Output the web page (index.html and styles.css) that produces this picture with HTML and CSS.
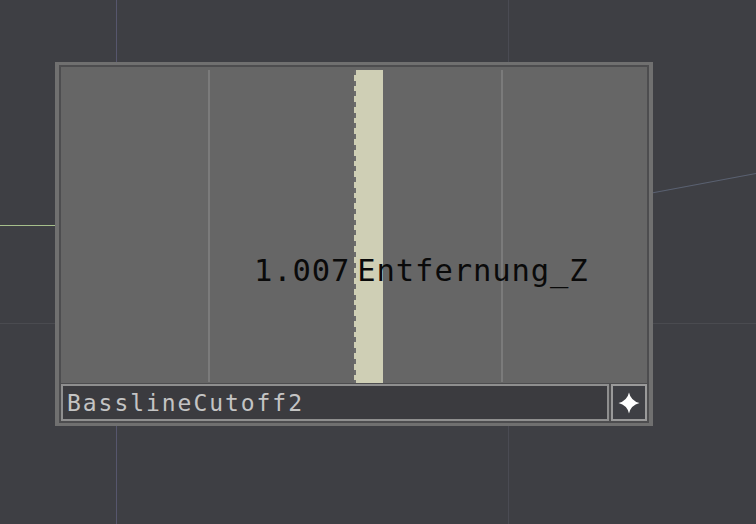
FILE: index.html
```html
<!DOCTYPE html>
<html>
<head>
<meta charset="utf-8">
<link rel="stylesheet" href="styles.css">
</head>
<body>
<div class="canvas">
  <div class="grid-v grid-v1"></div>
  <div class="grid-v grid-v2"></div>
  <div class="grid-h"></div>
  <div class="wire-in"></div>
  <svg class="wire-out" width="756" height="524" viewBox="0 0 756 524">
    <line x1="649" y1="193.5" x2="756" y2="173.5" stroke="#5a6171" stroke-width="1.2"/>
  </svg>

  <div class="node">
    <div class="panel">
      <div class="tick tick-a"></div>
      <div class="tick tick-b"></div>
      <div class="slider" style="left:50%"></div>
      <div class="label">
        <span class="value">1.007</span>
        <span class="name">Entfernung_Z</span>
      </div>
    </div>
    <div class="footer">
      <div class="field">BasslineCutoff2</div>
      <div class="btn">
        <svg width="24" height="24" viewBox="0 0 24 24">
          <path d="M12 1.5 Q13.8 9.8 22.5 12 Q13.8 14.2 12 22.5 Q10.2 14.2 1.5 12 Q10.2 9.8 12 1.5Z" fill="#ffffff"/>
        </svg>
      </div>
    </div>
  </div>
</div>
</body>
</html>
```
FILE: styles.css
```css
html, body {
  margin: 0;
  padding: 0;
  background: #3e3f44;
}
.canvas {
  position: relative;
  width: 756px;
  height: 524px;
  overflow: hidden;
  background: #3e3f44;
}
.grid-v {
  position: absolute;
  top: 0;
  bottom: 0;
  width: 1px;
}
.grid-v1 { left: 116px; background: #56566d; }
.grid-v2 { left: 508px; background: #4a4b53; }
.grid-h {
  position: absolute;
  left: 0;
  right: 0;
  top: 323px;
  height: 1px;
  background: #4a4b50;
}
.wire-in {
  position: absolute;
  left: 0;
  width: 62px;
  top: 225px;
  height: 1px;
  background: #a6bf8c;
}
.wire-out {
  position: absolute;
  left: 0;
  top: 0;
}
.node {
  position: absolute;
  left: 55px;
  top: 62px;
  width: 598px;
  height: 364px;
  box-sizing: border-box;
  border-style: solid;
  border-color: #707070;
  border-width: 3px 4px;
  padding: 2px;
  background: #4d4d4f;
  display: flex;
  flex-direction: column;
  gap: 1px;
}
.panel {
  position: relative;
  height: 316px;
  background: #666666;
  flex: none;
}
.tick {
  position: absolute;
  top: 3px;
  bottom: 1px;
  width: 2px;
  background: #7b7b7b;
}
.tick-a { left: 147px; }
.tick-b { left: 440px; }
.slider {
  position: absolute;
  top: 3px;
  bottom: 0;
  width: 29px;
  background: #cfcfb5;
}
.slider::before {
  content: "";
  position: absolute;
  left: 0;
  top: 0;
  bottom: 0;
  width: 2px;
  background: repeating-linear-gradient(to bottom, #6c6c6c 0 5px, #cfcfb5 5px 10.7px);
}
.label {
  position: absolute;
  left: 193px;
  top: 189px;
  display: flex;
  gap: 7px;
  font-family: "DejaVu Sans Mono", monospace;
  font-size: 30.5px;
  line-height: 30px;
  letter-spacing: 0.9px;
  color: #0a0a0a;
  white-space: nowrap;
}
.footer {
  flex: 1;
  display: flex;
  gap: 2px;
}
.field {
  flex: 1;
  box-sizing: border-box;
  border: 2px solid #8f8f8f;
  background: #3b3b3f;
  color: #c4c4c4;
  font-family: "DejaVu Sans Mono", monospace;
  font-size: 23px;
  letter-spacing: 1.95px;
  line-height: 31px;
  padding: 2px 0 0 4px;
  white-space: nowrap;
  overflow: hidden;
}
.btn {
  width: 36px;
  box-sizing: border-box;
  border: 2px solid #9a9a9a;
  background: #3e3f44;
  display: flex;
  align-items: center;
  justify-content: center;
}
.btn svg {
  display: block;
}
```
